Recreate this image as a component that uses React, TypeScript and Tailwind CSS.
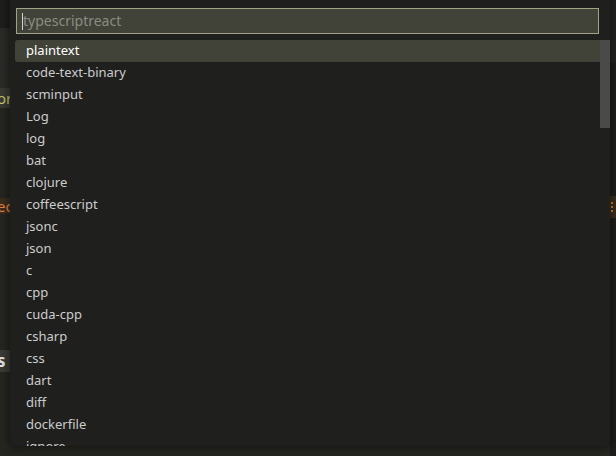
import React from "react";

const languages = [
  "plaintext",
  "code-text-binary",
  "scminput",
  "Log",
  "log",
  "bat",
  "clojure",
  "coffeescript",
  "jsonc",
  "json",
  "c",
  "cpp",
  "cuda-cpp",
  "csharp",
  "css",
  "dart",
  "diff",
  "dockerfile",
  "ignore",
];

export default function App() {
  return (
    <div className="relative w-[616px] h-[456px] overflow-hidden bg-[#232320] font-['Noto_Sans',sans-serif] text-[13px]">
      {/* editor behind the picker */}
      <div className="flex flex-col w-full h-full">
        <div className="h-[28px] bg-[#1e1e1d]" />
        <div className="h-[60px] bg-[#2a2a27]" />
        <div className="h-[20px] bg-[#3a3a34] text-[#c9c86c] text-[15px] leading-[20px] -indent-[3px]">or</div>
        <div className="h-[90px] bg-[#252521]" />
        <div className="h-[16px] bg-[#3b2d1f] text-[#e8833a] text-[15px] leading-[16px] -indent-[3px]">ec</div>
        <div className="h-[136px] bg-[#252521]" />
        <div className="h-[22px] bg-[#3b3b37] text-[#e6e6e6] text-[17px] font-bold leading-[22px] -indent-[3px]">s</div>
        <div className="flex-1 bg-[#25261f]" />
      </div>

      {/* right edge strip */}
      <div className="absolute right-0 top-0 w-[6px] h-full flex flex-col">
        <div className="h-[63px] bg-[#222221]" />
        <div className="h-[133px] bg-[#1d1d1b]" />
        <div className="h-[22px] bg-[#3a2d1f] flex flex-col items-start justify-center gap-[2px] pl-[1px]">
          <span className="w-[2px] h-[2px] bg-[#e07b22]" />
          <span className="w-[2px] h-[2px] bg-[#e07b22]" />
          <span className="w-[2px] h-[2px] bg-[#e07b22]" />
        </div>
        <div className="flex-1 bg-[#1d1d1b]" />
      </div>

      {/* quick pick */}
      <div className="absolute left-[10px] top-[-6px] w-[600px] h-[452px] rounded-[6px] bg-[#1f1f1e] shadow-[0_0_8px_2px_rgba(0,0,0,0.45)] flex flex-col overflow-hidden">
        <div className="pt-[14px] px-[6px]">
          <div className="h-[26px] border border-[#a4a286] bg-[#414339] flex items-center pl-[5px] mr-[5px]">
            <span className="w-px h-[17px] bg-[#d4d4d4]" />
            <span className="text-[#8b8b82] text-[14px] leading-none">typescriptreact</span>
          </div>
        </div>
        <div className="relative mt-[6px] flex-1 overflow-hidden">
          <div className="flex flex-col pl-[5px] pr-[5px]">
            {languages.map((lang, i) => (
              <div
                key={lang}
                className={
                  i === 0
                    ? "h-[22px] flex items-center pl-[11px] rounded-[3px] bg-[#414339] text-white"
                    : "h-[22px] flex items-center pl-[11px] text-[#cccccc]"
                }
              >
                {lang}
              </div>
            ))}
          </div>
          {/* scrollbar */}
          <div className="absolute right-0 top-0 w-[10px] h-[88px] bg-[#4a4a48]" />
        </div>
      </div>
    </div>
  );
}
